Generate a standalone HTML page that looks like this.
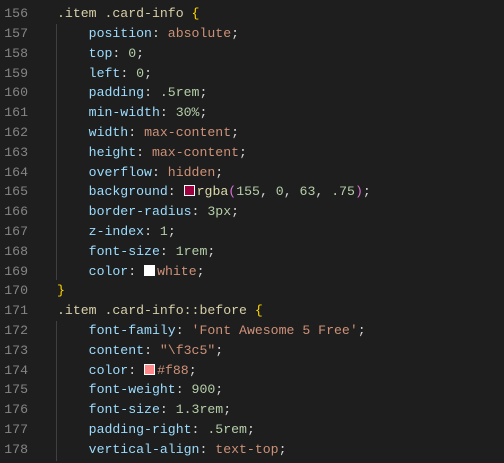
<!DOCTYPE html>
<html style="overflow:hidden;height:463px"><head><style>
body{margin:0;background:#1e1e1e;width:504px;height:463px;overflow:hidden;position:relative;font-family:"Liberation Mono",monospace;font-size:13.2px;}
.l{position:absolute;left:0;height:19.8px;line-height:19.8px;white-space:pre;width:504px}
.n{position:absolute;right:476px;color:#858585;text-align:right}
.c{position:absolute;left:57px;color:#d4d4d4}
.s{color:#d7cfa8}.p{color:#9cdcfe}.v{color:#ce9178}.m{color:#b5cea8}.b{color:#ffd700}.f{color:#dcdcaa}.q{color:#da70d6}.w{color:#d4d4d4}
.sw{display:inline-block;width:9px;height:9px;border:1px solid #fff;vertical-align:-1px;margin-right:2px}
.g{position:absolute;left:56px;width:1px;background:#404040}
</style></head><body>
<div class="g" style="top:24px;height:256px"></div>
<div class="g" style="top:321px;height:140px"></div>
<div class="l" style="top:-15.7px"><span class="c"><span class="b">}</span></span></div>
<div class="l" style="top:4.1px"><span class="n">156</span><span class="c"><span class="s">.item .card-info</span> <span class="b">{</span></span></div>
<div class="l" style="top:23.9px"><span class="n">157</span><span class="c">    <span class="p">position</span>: <span class="v">absolute</span>;</span></div>
<div class="l" style="top:43.7px"><span class="n">158</span><span class="c">    <span class="p">top</span>: <span class="m">0</span>;</span></div>
<div class="l" style="top:63.5px"><span class="n">159</span><span class="c">    <span class="p">left</span>: <span class="m">0</span>;</span></div>
<div class="l" style="top:83.3px"><span class="n">160</span><span class="c">    <span class="p">padding</span>: <span class="m">.5rem</span>;</span></div>
<div class="l" style="top:103.1px"><span class="n">161</span><span class="c">    <span class="p">min-width</span>: <span class="m">30%</span>;</span></div>
<div class="l" style="top:122.9px"><span class="n">162</span><span class="c">    <span class="p">width</span>: <span class="v">max-content</span>;</span></div>
<div class="l" style="top:142.7px"><span class="n">163</span><span class="c">    <span class="p">height</span>: <span class="v">max-content</span>;</span></div>
<div class="l" style="top:162.5px"><span class="n">164</span><span class="c">    <span class="p">overflow</span>: <span class="v">hidden</span>;</span></div>
<div class="l" style="top:182.3px"><span class="n">165</span><span class="c">    <span class="p">background</span>: <span class="sw" style="background:#9b003f"></span><span class="f">rgba</span><span class="q">(</span><span class="m">155</span>, <span class="m">0</span>, <span class="m">63</span>, <span class="m">.75</span><span class="q">)</span>;</span></div>
<div class="l" style="top:202.1px"><span class="n">166</span><span class="c">    <span class="p">border-radius</span>: <span class="m">3px</span>;</span></div>
<div class="l" style="top:221.9px"><span class="n">167</span><span class="c">    <span class="p">z-index</span>: <span class="m">1</span>;</span></div>
<div class="l" style="top:241.7px"><span class="n">168</span><span class="c">    <span class="p">font-size</span>: <span class="m">1rem</span>;</span></div>
<div class="l" style="top:261.5px"><span class="n">169</span><span class="c">    <span class="p">color</span>: <span class="sw" style="background:#fff"></span><span class="v">white</span>;</span></div>
<div class="l" style="top:281.3px"><span class="n">170</span><span class="c"><span class="b">}</span></span></div>
<div class="l" style="top:301.1px"><span class="n">171</span><span class="c"><span class="s">.item .card-info::before</span> <span class="b">{</span></span></div>
<div class="l" style="top:320.9px"><span class="n">172</span><span class="c">    <span class="p">font-family</span>: <span class="v">'Font Awesome 5 Free'</span>;</span></div>
<div class="l" style="top:340.7px"><span class="n">173</span><span class="c">    <span class="p">content</span>: <span class="v">"\f3c5"</span>;</span></div>
<div class="l" style="top:360.5px"><span class="n">174</span><span class="c">    <span class="p">color</span>: <span class="sw" style="background:#f88"></span><span class="v">#f88</span>;</span></div>
<div class="l" style="top:380.3px"><span class="n">175</span><span class="c">    <span class="p">font-weight</span>: <span class="m">900</span>;</span></div>
<div class="l" style="top:400.1px"><span class="n">176</span><span class="c">    <span class="p">font-size</span>: <span class="m">1.3rem</span>;</span></div>
<div class="l" style="top:419.9px"><span class="n">177</span><span class="c">    <span class="p">padding-right</span>: <span class="m">.5rem</span>;</span></div>
<div class="l" style="top:439.7px"><span class="n">178</span><span class="c">    <span class="p">vertical-align</span>: <span class="v">text-top</span>;</span></div>
<div class="l" style="top:459.5px"><span class="n">179</span><span class="c"><span class="b">}</span></span></div>
</body></html>
